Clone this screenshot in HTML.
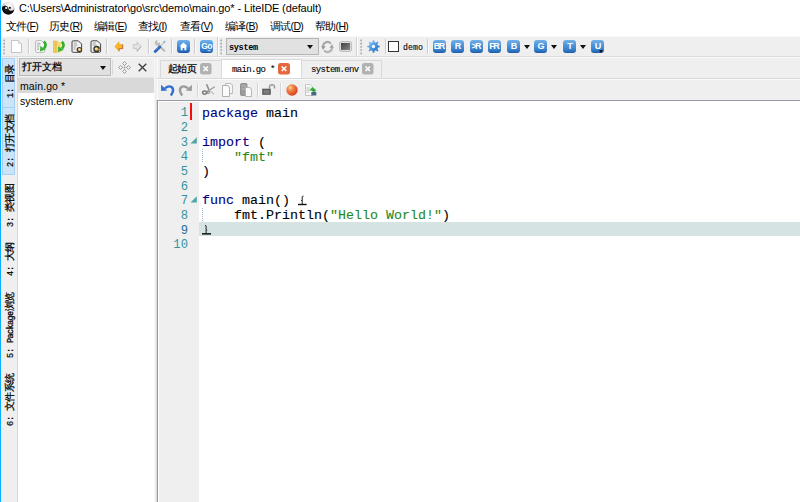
<!DOCTYPE html>
<html><head><meta charset="utf-8">
<style>
*{margin:0;padding:0;box-sizing:border-box}
html,body{width:800px;height:502px;overflow:hidden;background:#fff}
body{position:relative;font-family:"Liberation Sans",sans-serif;font-size:12px;color:#000}
.a{position:absolute}
svg{position:absolute;overflow:visible}
.mono{font-family:"Liberation Mono",monospace}
.sim{font-family:"Liberation Mono",monospace;font-size:9px;letter-spacing:-0.4px;line-height:12px;white-space:nowrap;color:#000}
#title{left:19px;top:0px;font-size:11px;line-height:16px;color:#000;white-space:nowrap;letter-spacing:-0.12px}
.menu{top:18px;font-size:10.5px;line-height:16px;white-space:nowrap;letter-spacing:-0.7px}
.menu u{text-decoration:underline}
.sep{width:2px;height:15px;top:39px;border-left:1px solid #cdcdcd;border-right:1px solid #fbfbfb}
.grip{width:3px;top:39px;height:16px;background-image:radial-gradient(circle at 1.2px 1.3px,#adadad 0.7px,transparent 1.2px);background-size:3px 3.25px}
.bl{top:40px;width:13px;height:13px;border-radius:3px;background:linear-gradient(#72b0e8,#4a92d8 45%,#3580cc 75%,#1f5aa5);color:#fff;font-weight:bold;font-size:10px;line-height:13px;text-align:center;letter-spacing:-1px;font-family:"Liberation Sans",sans-serif}
.dd{width:0;height:0;border-left:3.5px solid transparent;border-right:3.5px solid transparent;border-top:4px solid #111;top:45px}
.vtab{left:2px;width:13px}
.vtab.on{background:#cce4f7;border:1px solid #a6d0f5}
.vs{font-size:8.5px;letter-spacing:-0.1px;-webkit-text-stroke:0.2px}
.vtxt{position:absolute;white-space:nowrap;transform:rotate(-90deg);transform-origin:0 0;font-size:10px;letter-spacing:-0.6px;line-height:12px;color:#000;-webkit-text-stroke:0.25px}
.ln{left:158px;width:30px;text-align:right;color:#3593a0;font-family:"Liberation Mono",monospace;font-size:12.2px;line-height:15px}
.code{left:202px;font-family:"Liberation Mono",monospace;font-size:13.33px;-webkit-text-stroke:0.1px;line-height:15px;white-space:pre;color:#000}
.br{-webkit-text-stroke:0;text-decoration:underline;text-decoration-thickness:1px;text-underline-offset:1px}
.kw{color:#00007f}
.st{color:#1f8a1f}
</style></head><body>
<!-- window left border -->
<div class="a" style="left:0;top:0;width:1px;height:502px;background:#0aadff"></div>

<!-- ===== TITLE ===== -->
<svg style="left:0;top:0" width="17" height="17" viewBox="0 0 17 17">
 <defs><radialGradient id="yy" cx="60%" cy="30%" r="70%"><stop offset="0" stop-color="#ffffff"/><stop offset="0.55" stop-color="#e0e0e0"/><stop offset="1" stop-color="#8a8a8a"/></radialGradient>
 <radialGradient id="yk" cx="40%" cy="40%" r="70%"><stop offset="0" stop-color="#222"/><stop offset="1" stop-color="#000"/></radialGradient></defs>
 <circle cx="8.2" cy="8" r="6.3" fill="url(#yy)"/>
 <path d="M1.9 8.3 A6.3 6.3 0 0 0 14.5 8.3 A3.15 3.15 0 0 1 8.2 8.3 A3.15 3.15 0 0 0 1.9 8.3Z" fill="url(#yk)" transform="rotate(-12 8.2 8)"/>
 <circle cx="6.2" cy="8" r="1.1" fill="#fff"/><circle cx="9.8" cy="7.8" r="1.1" fill="#111"/>
</svg>
<div id="title" class="a">C:\Users\Administrator\go\src\demo\main.go* - LiteIDE (default)</div>

<!-- ===== MENU ===== -->
<div class="a menu" style="left:6px">文件(<u>F</u>)</div>
<div class="a menu" style="left:49px">历史(<u>R</u>)</div>
<div class="a menu" style="left:94px">编辑(<u>E</u>)</div>
<div class="a menu" style="left:138px">查找(<u>I</u>)</div>
<div class="a menu" style="left:180px">查看(<u>V</u>)</div>
<div class="a menu" style="left:225px">编译(<u>B</u>)</div>
<div class="a menu" style="left:270px">调试(<u>D</u>)</div>
<div class="a menu" style="left:315px">帮助(<u>H</u>)</div>

<!-- ===== MAIN TOOLBAR ===== -->
<div class="a" style="left:1px;top:36px;width:799px;height:21px;background:#efefef;border-top:1px solid #fafafa;border-bottom:1px solid #dcdcdc"></div>
<div class="a grip" style="left:3px"></div>
<svg style="left:11px;top:40px" width="12" height="13" viewBox="0 0 12 13"><path d="M0.5 0.5H7.5L10.5 3.5V12.5H0.5Z" fill="#fff" stroke="#c4c4c4"/><path d="M7.5 0.5V3.5H10.5" fill="#eee" stroke="#d0d0d0"/></svg>
<div class="a sep" style="left:28px"></div>
<svg style="left:35px;top:40px" width="12" height="13" viewBox="0 0 12 13"><path d="M0.6 1.8Q0.6 0.6 1.8 0.6H6.5L9.6 3.7V11.2Q9.6 12.4 8.4 12.4H1.8Q0.6 12.4 0.6 11.2Z" fill="#fafafa" stroke="#b0b0b0" stroke-width="0.9"/><path d="M2 3.2H5.5M2 4.8H5.5M2 6.4H4.5M2 8H4M2 9.6H4" stroke="#a0a0a0" stroke-width="0.8"/><path d="M8.8 1.5 Q12.3 4.5 9 8.3" fill="none" stroke="#2fae2a" stroke-width="2.6"/><path d="M5 11.6 L5.3 5.9 L10.8 9.6Z" fill="#36b532"/></svg>
<svg style="left:53px;top:40px" width="12" height="13" viewBox="0 0 12 13"><path d="M0.5 1 H3.8 L4.8 2 V12.5 H0.5Z" fill="#f2cf5a" stroke="#e0b040" stroke-width="0.6"/><path d="M3 2 H8 V12.5 H3Z" fill="#f4dc7e"/><path d="M3 2 V12.5" stroke="#e6a54a" stroke-width="0.9"/><path d="M8.8 1.8 Q12.3 4.8 9 8.6" fill="none" stroke="#2fae2a" stroke-width="2.6"/><path d="M5 11.9 L5.3 6.2 L10.8 9.9Z" fill="#36b532"/></svg>
<svg style="left:71px;top:40px" width="12" height="13" viewBox="0 0 12 13"><path d="M1 2Q1 0.8 2.2 0.8H7.3L10.6 4.1V11.3Q10.6 12.3 9.4 12.3H2.2Q1 12.3 1 11.3Z" fill="#f3f3f3" stroke="#444" stroke-width="1"/><path d="M2.6 3H5.8M2.6 5H6.5M2.6 7H5M2.6 9H4.5" stroke="#8a8a8a" stroke-width="0.8"/><circle cx="8.3" cy="9.6" r="2.7" fill="#3a3a3a"/><circle cx="8.5" cy="9.6" r="1.5" fill="#f2d070"/><circle cx="8" cy="9.2" r="0.6" fill="#fff6d0"/></svg>
<svg style="left:90px;top:40px" width="12" height="13" viewBox="0 0 12 13"><path d="M1 2Q1 0.8 2.2 0.8H7.3L10.6 4.1V11.3Q10.6 12.3 9.4 12.3H2.2Q1 12.3 1 11.3Z" fill="#f3f3f3" stroke="#444" stroke-width="1"/><path d="M2.6 3H5.8M2.6 5H6.5" stroke="#8a8a8a" stroke-width="0.8"/><circle cx="6.6" cy="9" r="3.3" fill="#363636"/><circle cx="6.4" cy="9" r="1.7" fill="#f0cc66"/><circle cx="9" cy="9.5" r="0.9" fill="#e0a840"/><circle cx="6" cy="8.5" r="0.7" fill="#fff4d0"/></svg>
<div class="a sep" style="left:106px"></div>
<svg style="left:114px;top:41px" width="10" height="11" viewBox="0 0 10 11"><path d="M0.8 5.5 L5 0.8 V3.6 H8.7 V7.6 H5 V10.3Z" fill="#fbb526" stroke="#e39a1a" stroke-width="0.5"/><path d="M5 7.6 H8.7 V3.6" fill="none" stroke="#b86a2a" stroke-width="0.9"/><path d="M5 10.3 V7.6" stroke="#c0722a" stroke-width="0.9"/></svg>
<svg style="left:132px;top:41px" width="10" height="11" viewBox="0 0 10 11"><path d="M9.2 5.5 L5 0.8 V3.6 H1.3 V7.6 H5 V10.3Z" fill="#e4e4e4" stroke="#c2c2c2" stroke-width="0.8"/><path d="M9.2 5.5 L5 10.3" stroke="#a9a9a9" stroke-width="1"/></svg>
<div class="a sep" style="left:148px"></div>
<svg style="left:154px;top:40px" width="12" height="13" viewBox="0 0 12 13"><path d="M4.5 5 L10.2 10.8" stroke="#b9b9b9" stroke-width="2.2" stroke-linecap="round"/><path d="M1.2 3.2 Q1 0.8 3.2 0.6 L2.6 2.4 L3.9 3.6 L5.5 2.8 Q5.6 5.2 3.4 5.3 Q1.6 5.2 1.2 3.2Z" fill="#c8c8c8" stroke="#a5a5a5" stroke-width="0.6"/><path d="M6 6.5 L9.3 3.2" stroke="#a9a9a9" stroke-width="1"/><path d="M9 2.2 L10.6 0.9 L11.4 1.7 L10.1 3.3Z" fill="#8fc3cf" stroke="#7ab0c0" stroke-width="0.6"/><path d="M1.2 11.6 L5.8 7" stroke="#2a64b8" stroke-width="2.8" stroke-linecap="round"/><path d="M2.2 10 L5 7.2" stroke="#5f9ae0" stroke-width="0.8"/></svg>
<div class="a sep" style="left:171px"></div>
<svg style="left:177px;top:40px" width="13" height="13" viewBox="0 0 13 13"><defs><linearGradient id="bg1" x1="0" y1="0" x2="0" y2="1"><stop offset="0" stop-color="#6eb1ec"/><stop offset="0.6" stop-color="#3b89d6"/><stop offset="0.85" stop-color="#2a6fc2"/><stop offset="1" stop-color="#1b4f98"/></linearGradient></defs><rect x="0" y="0" width="13" height="13" rx="3" fill="url(#bg1)"/><path d="M6.5 2.5 L10.5 6.3 H9.3 V10.2 H7.4 V8 H5.6 V10.2 H3.7 V6.3 H2.5Z" fill="#fff"/></svg>
<div class="a sep" style="left:194px"></div>
<svg style="left:200px;top:40px" width="13" height="13" viewBox="0 0 13 13"><rect x="0" y="0" width="13" height="13" rx="3" fill="url(#bg1)"/><text x="6.5" y="9.3" text-anchor="middle" font-family="Liberation Sans" font-weight="bold" font-size="8.5" fill="#fff" letter-spacing="-0.6">Go</text><rect x="7.5" y="10.2" width="3" height="1" fill="#cfe4f7"/></svg>
<div class="a" style="left:217px;top:37px;width:2px;height:19px;border-left:1px solid #d2d2d2;border-right:1px solid #fff"></div>
<div class="a grip" style="left:220px"></div>
<div class="a" style="left:226px;top:38px;width:93px;height:17px;background:#e1e1e1;border:1px solid #b4b4b4"></div>
<div class="a sim" style="left:229px;top:42px;font-size:8.5px;font-weight:bold;letter-spacing:-0.3px">system</div>
<div class="a dd" style="left:307px;top:45px"></div>
<svg style="left:321px;top:41px" width="13" height="12" viewBox="0 0 13 12"><path d="M2.3 6.5 A4.3 4.3 0 0 1 9.8 2.6" fill="none" stroke="#a9a9a9" stroke-width="2.2"/><path d="M10.7 5.5 A4.3 4.3 0 0 1 3.2 9.4" fill="none" stroke="#b5b5b5" stroke-width="2.2"/><path d="M0.2 5 L4.6 5.2 L2 9Z" fill="#9a9a9a"/><path d="M12.8 7 L8.4 6.8 L11 3Z" fill="#a5a5a5"/></svg>
<svg style="left:339px;top:41px" width="13" height="11" viewBox="0 0 13 11"><defs><linearGradient id="gsq" x1="0" y1="0" x2="1" y2="1"><stop offset="0" stop-color="#3f3f3f"/><stop offset="1" stop-color="#8a8a8a"/></linearGradient></defs><rect x="0.5" y="0.5" width="12" height="10" rx="2" fill="#dcdcdc" stroke="#bdbdbd"/><rect x="2" y="2" width="9" height="7" fill="url(#gsq)"/></svg>
<div class="a" style="left:356px;top:37px;width:2px;height:19px;border-left:1px solid #d2d2d2;border-right:1px solid #fff"></div>
<div class="a grip" style="left:360px"></div>
<svg style="left:367px;top:40px" width="13" height="13" viewBox="0 0 13 13"><defs><linearGradient id="gg" x1="0" y1="0" x2="1" y2="1"><stop offset="0" stop-color="#a8d8fa"/><stop offset="0.5" stop-color="#4a97e0"/><stop offset="1" stop-color="#1b5fb5"/></linearGradient></defs><path d="M5.51 2.01 L5.76 0.24 L7.24 0.24 L7.49 2.01 L8.98 2.63 L10.40 1.55 L11.45 2.60 L10.37 4.02 L10.99 5.51 L12.76 5.76 L12.76 7.24 L10.99 7.49 L10.37 8.98 L11.45 10.40 L10.40 11.45 L8.98 10.37 L7.49 10.99 L7.24 12.76 L5.76 12.76 L5.51 10.99 L4.02 10.37 L2.60 11.45 L1.55 10.40 L2.63 8.98 L2.01 7.49 L0.24 7.24 L0.24 5.76 L2.01 5.51 L2.63 4.02 L1.55 2.60 L2.60 1.55 L4.02 2.63Z" fill="url(#gg)"/><circle cx="6.5" cy="6.5" r="1.7" fill="#f4f8fc"/></svg>
<div class="a sep" style="left:385px"></div>
<div class="a" style="left:388px;top:41px;width:11px;height:11px;background:#fff;border:1px solid #333"></div>
<div class="a sim" style="left:403px;top:42px;font-size:8.2px;letter-spacing:0.1px;-webkit-text-stroke:0.1px">demo</div>
<div class="a sep" style="left:427px"></div>
<div class="a bl" style="left:433px;font-size:9px;letter-spacing:-1.6px;text-indent:-1.5px">BR</div>
<div class="a bl" style="left:451px;font-size:9px">R</div>
<div class="a bl" style="left:470px;font-size:9px;letter-spacing:-1.6px;text-indent:-1.5px">&gt;R</div>
<div class="a bl" style="left:488px;font-size:9px;letter-spacing:-1.6px;text-indent:-1.5px">FR</div>
<div class="a bl" style="left:507px;font-size:9px">B</div>
<div class="a dd" style="left:524px"></div>
<div class="a bl" style="left:534px;font-size:9px">G</div>
<div class="a dd" style="left:551px"></div>
<div class="a bl" style="left:563px;font-size:9px">T</div>
<div class="a dd" style="left:580px"></div>
<div class="a bl" style="left:591px;font-size:9px">U</div>
<div class="a" style="left:599px;top:50px;width:0;height:0;border-left:2.5px solid transparent;border-right:2.5px solid transparent;border-top:3px solid #111"></div>


<!-- ===== LEFT VERTICAL TABS ===== -->
<div class="a" style="left:1px;top:57px;width:17px;height:445px;background:#efefef;border-right:1px solid #d8d8d8"></div>
<div class="a vtab on" style="top:58px;height:50px"></div>
<div class="a vtab on" style="top:107px;height:68px"></div>
<div class="vtxt" style="left:4px;top:98px"><span class="sim vs">1: </span>目录</div>
<div class="vtxt" style="left:4px;top:167px"><span class="sim vs">2: </span>打开文档</div>
<div class="vtxt" style="left:4px;top:227px"><span class="sim vs">3: </span>类视图</div>
<div class="vtxt" style="left:4px;top:276px"><span class="sim vs">4: </span>大纲</div>
<div class="vtxt" style="left:4px;top:358px"><span class="sim vs">5: </span><span class="sim" style="font-size:8.5px;letter-spacing:-0.6px;-webkit-text-stroke:0.3px">Package</span>浏览</div>
<div class="vtxt" style="left:4px;top:426px"><span class="sim vs">6: </span>文件系统</div>


<!-- ===== LEFT PANEL ===== -->
<div class="a" style="left:18px;top:57px;width:136px;height:445px;background:#fff"></div>
<div class="a" style="left:18px;top:57px;width:136px;height:21px;background:#efefef;border-top:1px solid #fafafa"></div>
<div class="a" style="left:19px;top:58px;width:92px;height:18px;background:#e1e1e1;border:1px solid #b9b9b9"></div>
<div class="a" style="left:22px;top:60px;font-size:10px;line-height:14px;white-space:nowrap;-webkit-text-stroke:0.25px">打开文档</div>
<div class="a dd" style="left:100px;top:66px"></div>
<div class="a" style="left:112px;top:60px;width:1px;height:15px;background:#d9d9d9"></div>
<svg style="left:118px;top:61px" width="13" height="13" viewBox="0 0 13 13"><g fill="#fbfbfb" stroke="#7f7f7f" stroke-width="0.8"><path d="M6.5 0.6 L8.3 2.6 L6.5 4.6 L4.7 2.6Z"/><path d="M6.5 12.4 L8.3 10.4 L6.5 8.4 L4.7 10.4Z"/><path d="M0.6 6.5 L2.6 4.7 L4.6 6.5 L2.6 8.3Z"/><path d="M12.4 6.5 L10.4 4.7 L8.4 6.5 L10.4 8.3Z"/></g><circle cx="6.5" cy="6.5" r="0.9" fill="#999"/></svg>
<svg style="left:138px;top:63px" width="9" height="9" viewBox="0 0 9 9"><path d="M0.7 0.7 L8.3 8.3 M8.3 0.7 L0.7 8.3" stroke="#3c3c3c" stroke-width="1.3"/></svg>
<div class="a" style="left:18px;top:77px;width:136px;height:1px;background:#e6e6e6"></div>
<div class="a" style="left:18px;top:78px;width:136px;height:15px;background:#d9d9d9"></div>
<div class="a" style="left:20px;top:79px;font-size:10.5px;line-height:14px;white-space:nowrap;letter-spacing:0.1px">main.go *</div>
<div class="a" style="left:20px;top:94px;font-size:10.5px;line-height:14px;white-space:nowrap">system.env</div>

<div class="a" style="left:154px;top:57px;width:3px;height:445px;background:#f0f0f0;border-left:1px solid #f6f6f6"></div>

<!-- ===== EDITOR TABS ===== -->
<div class="a" style="left:157px;top:57px;width:643px;height:22px;background:#efefef;border-top:1px solid #fafafa;border-left:1px solid #fafafa"></div>
<div class="a" style="left:160px;top:60px;width:62px;height:18px;background:#efefef;border:1px solid #d9d9d9;border-bottom:none"></div>
<div class="a" style="left:168px;top:62px;font-size:10px;letter-spacing:-0.6px;line-height:14px;white-space:nowrap;-webkit-text-stroke:0.25px">起始页</div>
<svg style="left:200px;top:63px" width="12" height="12" viewBox="0 0 12 12"><rect x="0" y="0" width="11.5" height="11.5" rx="2.5" fill="#b1b1b1"/><path d="M3.5 3.5 L8 8 M8 3.5 L3.5 8" stroke="#fff" stroke-width="1.6"/></svg>
<div class="a" style="left:221px;top:59px;width:81px;height:20px;background:#fff;border:1px solid #dadada;border-bottom:none"></div>
<div class="a sim" style="left:232px;top:64px;letter-spacing:-0.65px;-webkit-text-stroke:0.1px">main.go *</div>
<svg style="left:278px;top:63px" width="12" height="12" viewBox="0 0 12 12"><rect x="0" y="0" width="12" height="11.5" rx="2.5" fill="#e5683f"/><path d="M3.7 3.5 L8.3 8 M8.3 3.5 L3.7 8" stroke="#fff" stroke-width="1.6"/></svg>
<div class="a" style="left:302px;top:60px;width:80px;height:18px;background:#efefef;border:1px solid #d9d9d9;border-bottom:none;border-left:none"></div>
<div class="a sim" style="left:311px;top:64px;letter-spacing:-0.65px;-webkit-text-stroke:0.1px">system.env</div>
<svg style="left:362px;top:63px" width="12" height="12" viewBox="0 0 12 12"><rect x="0" y="0" width="11.5" height="11.5" rx="2.5" fill="#b1b1b1"/><path d="M3.5 3.5 L8 8 M8 3.5 L3.5 8" stroke="#fff" stroke-width="1.6"/></svg>

<div class="a" style="left:157px;top:78px;width:643px;height:1px;background:#dadada"></div>

<!-- ===== EDITOR TOOLBAR ===== -->
<div class="a" style="left:157px;top:79px;width:643px;height:21px;background:#efefef;border-top:1px solid #fafafa;border-left:1px solid #fafafa"></div>
<svg style="left:161px;top:84px" width="13" height="12" viewBox="0 0 13 12"><path d="M4 4.2 Q8 1.2 10.8 3.2 Q13 5.5 11.5 8.5 Q10.8 10 9.8 11.5" fill="none" stroke="#2f6fd0" stroke-width="2.4"/><path d="M0 0.8 L0.2 7 L6.3 6.6Z" fill="#2f6fd0"/></svg>
<svg style="left:179px;top:84px" width="13" height="12" viewBox="0 0 13 12"><path d="M9 4.2 Q5 1.2 2.2 3.2 Q0 5.5 1.5 8.5 Q2.2 10 3.2 11.5" fill="none" stroke="#9b9b9b" stroke-width="2.4"/><path d="M13 0.8 L12.8 7 L6.7 6.6Z" fill="#9b9b9b"/></svg>
<div class="a" style="left:197px;top:83px;width:2px;height:14px;border-left:1px solid #d0d4d8;border-right:1px solid #fafafa"></div>
<svg style="left:202px;top:84px" width="13" height="11" viewBox="0 0 13 11"><path d="M4.5 0.3 L7 6" stroke="#8d8d8d" stroke-width="1.6"/><path d="M12.8 2.8 L5.5 7.2" stroke="#9a9a9a" stroke-width="1.3"/><path d="M7 5.8 L12 10.2" stroke="#c0c0c0" stroke-width="1.2"/><ellipse cx="2.6" cy="8.6" rx="2" ry="1.7" fill="none" stroke="#7a7a7a" stroke-width="1.5"/><ellipse cx="6.2" cy="8.3" rx="1.2" ry="1.2" fill="none" stroke="#8a8a8a" stroke-width="1.1"/></svg>
<svg style="left:222px;top:83px" width="11" height="14" viewBox="0 0 11 14"><path d="M3.5 0.5 H8 Q10.5 0.5 10.5 3 V10.5 H3.5Z" fill="#f6f6f6" stroke="#b7b7b7" stroke-width="0.9"/><path d="M0.5 2.5 H5 Q7.5 2.5 7.5 5 V13.5 H0.5Z" fill="#fbfbfb" stroke="#a9a9a9" stroke-width="0.9"/></svg>
<svg style="left:240px;top:83px" width="12" height="14" viewBox="0 0 12 14"><rect x="0.5" y="0.5" width="6.5" height="12" rx="1" fill="#9a9a9a" stroke="#888" stroke-width="0.8"/><path d="M1.5 3 H6 M1.5 6 H6" stroke="#bdbdbd" stroke-width="1"/><path d="M5.5 4.5 H9 Q11.5 4.5 11.5 7 V13.5 H5.5Z" fill="#fafafa" stroke="#b0b0b0" stroke-width="0.9"/></svg>
<div class="a" style="left:257px;top:83px;width:2px;height:14px;border-left:1px solid #d0d4d8;border-right:1px solid #fafafa"></div>
<svg style="left:262px;top:84px" width="14" height="11" viewBox="0 0 14 11"><rect x="0.5" y="5" width="8" height="5.5" fill="#666" stroke="#555" stroke-width="0.6"/><rect x="2" y="6.3" width="5" height="3" fill="#7f7f7f"/><path d="M7.5 5 V3 Q7.5 0.8 10 0.8 Q12.5 0.8 12.5 3 V4.5" fill="none" stroke="#9d9d9d" stroke-width="1.5"/></svg>
<div class="a" style="left:280px;top:83px;width:2px;height:14px;border-left:1px solid #d0d4d8;border-right:1px solid #fafafa"></div>
<svg style="left:286px;top:84px" width="12" height="12" viewBox="0 0 12 12"><defs><radialGradient id="rb" cx="35%" cy="30%" r="70%"><stop offset="0" stop-color="#ffd39a"/><stop offset="0.35" stop-color="#f08a4a"/><stop offset="1" stop-color="#d8401e"/></radialGradient></defs><circle cx="6" cy="6" r="5.7" fill="url(#rb)"/></svg>
<svg style="left:305px;top:84px" width="12" height="12" viewBox="0 0 12 12"><path d="M0.5 0.5 H5 L7.5 3 V11.5 H0.5Z" fill="#f8f8f8" stroke="#bbb" stroke-width="0.8"/><path d="M1.5 4 H5 M1.5 6 H4 M1.5 8 H4" stroke="#aaa" stroke-width="0.8"/><path d="M4 6.5 L7.5 3 L11.5 6.5 Z" fill="#35b335"/><path d="M6.5 6 H9.5 V8" stroke="#35b335" stroke-width="1.5"/><rect x="6.3" y="8" width="5" height="3.5" fill="#456a8a"/></svg>


<!-- ===== EDITOR ===== -->
<div class="a" style="left:157px;top:100px;width:643px;height:402px;background:#fff;border-left:1px solid #959ca3;border-top:1px solid #959ca3"></div>
<div class="a" style="left:156px;top:100px;width:1px;height:402px;background:#d6d9dc"></div>
<div class="a" style="left:159px;top:102px;width:40px;height:400px;background:#efefef"></div>
<div class="a" style="left:199px;top:222px;width:601px;height:14px;background:#d6e3e3"></div>
<div class="a" style="left:190px;top:103px;width:2px;height:17px;background:#f01010"></div>
<div class="a ln" style="top:106.40px">1</div>
<div class="a ln" style="top:121.04px">2</div>
<div class="a ln" style="top:135.68px">3</div>
<div class="a ln" style="top:150.32px">4</div>
<div class="a ln" style="top:164.96px">5</div>
<div class="a ln" style="top:179.60px">6</div>
<div class="a ln" style="top:194.24px">7</div>
<div class="a ln" style="top:208.88px">8</div>
<div class="a ln" style="top:223.52px;color:#1e6e96">9</div>
<div class="a ln" style="top:238.16px">10</div>
<div class="a code" style="top:105.60px"><span class="kw">package</span> main</div>
<div class="a code" style="top:134.88px"><span class="kw">import</span> (</div>
<div class="a code" style="top:149.52px">    <span class="st">"fmt"</span></div>
<div class="a code" style="top:164.16px">)</div>
<div class="a code" style="top:193.44px"><span class="kw">func</span> main()</div>
<div class="a code" style="top:208.08px">    fmt.Println(<span class="st">"Hello World!"</span>)</div>
<div class="a code" style="top:222.72px"></div>
<svg style="left:190px;top:137px" width="8" height="7" viewBox="0 0 8 7"><path d="M0.5 6.5 L6.8 0.3 V6.5Z" fill="#4fa5a5"/></svg>
<svg style="left:190px;top:196px" width="8" height="7" viewBox="0 0 8 7"><path d="M0.5 6.5 L6.8 0.3 V6.5Z" fill="#4fa5a5"/></svg>
<div class="a" style="left:202px;top:149px;width:1px;height:13px;background-image:linear-gradient(#9db4cc 50%,transparent 50%);background-size:1px 2px"></div>
<div class="a" style="left:202px;top:208px;width:1px;height:13px;background-image:linear-gradient(#9db4cc 50%,transparent 50%);background-size:1px 2px"></div>
<svg style="left:296px;top:194px" width="12" height="12" viewBox="0 0 12 12"><path d="M6.2 11 V2.8 Q6.2 2 7.6 2.2" fill="none" stroke="#222" stroke-width="1"/><path d="M6 6.5 L5 6.6" stroke="#333" stroke-width="1"/><rect x="2" y="9.8" width="8.6" height="1.4" fill="#111"/></svg>
<svg style="left:200px;top:222px" width="12" height="13" viewBox="0 0 12 13"><path d="M6.1 11.8 V4 Q6.1 3.3 5 3.5" fill="none" stroke="#222" stroke-width="1"/><path d="M6.3 8 L7.3 8.1" stroke="#333" stroke-width="1"/><rect x="2" y="11.1" width="9" height="1.5" fill="#111"/></svg>
<!--EDEXTRA-->
</body></html>
